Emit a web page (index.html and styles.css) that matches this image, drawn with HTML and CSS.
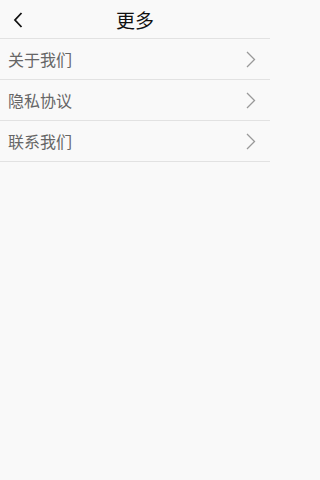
FILE: index.html
```html
<!DOCTYPE html>
<html lang="zh">
<head>
<meta charset="utf-8">
<link rel="stylesheet" href="styles.css">
</head>
<body>
<div class="page">
<header class="topbar">
  <span class="back">
    <svg width="12" height="18" viewBox="0 0 12 18"><path d="M9.5 2 L3 9 L9.5 16" fill="none" stroke="#111" stroke-width="1.8"/></svg>
  </span>
  <h1 class="title">更多</h1>
</header>
<ul class="menu">
  <li class="item"><span class="label">关于我们</span><svg class="chev" width="10" height="17" viewBox="0 0 10 17"><path d="M1 1 L8.5 8.5 L1 16" fill="none" stroke="#999" stroke-width="1.3"/></svg></li>
  <li class="item"><span class="label">隐私协议</span><svg class="chev" width="10" height="17" viewBox="0 0 10 17"><path d="M1 1 L8.5 8.5 L1 16" fill="none" stroke="#999" stroke-width="1.3"/></svg></li>
  <li class="item"><span class="label">联系我们</span><svg class="chev" width="10" height="17" viewBox="0 0 10 17"><path d="M1 1 L8.5 8.5 L1 16" fill="none" stroke="#999" stroke-width="1.3"/></svg></li>
</ul>
</div>
</body>
</html>
```
FILE: styles.css
```css
html, body {
  margin: 0;
  padding: 0;
  background: #f9f9f9;
  font-family: "Noto Sans CJK SC", "Noto Sans", sans-serif;
}
.page {
  width: 270px;
}
.topbar {
  position: relative;
  height: 38px;
  display: flex;
  align-items: center;
  justify-content: center;
  border-bottom: 1px solid #e2e2e2;
}
.back {
  position: absolute;
  left: 12px;
  top: 11px;
  display: flex;
}
.title {
  margin: 0;
  font-size: 19px;
  font-weight: 400;
  color: #111;
  line-height: 1;
}
.menu {
  list-style: none;
  margin: 0;
  padding: 0;
}
.item {
  height: 40px;
  display: flex;
  align-items: center;
  justify-content: space-between;
  padding: 0 14px 0 8px;
  border-bottom: 1px solid #e2e2e2;
}
.label {
  font-size: 16px;
  color: #666;
  line-height: 1;
}
.chev {
  display: block;
}
```
